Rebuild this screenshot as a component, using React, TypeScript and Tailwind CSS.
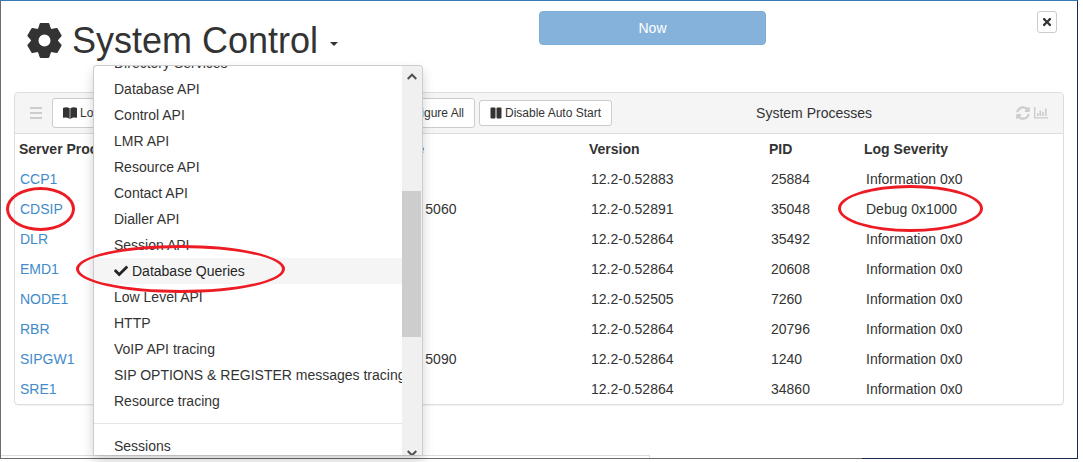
import { useState } from "react";
import { clsx } from "clsx";
import { FaCheck, FaSyncAlt, FaTimes } from "react-icons/fa";

interface ServerProcess {
  name: string;
  port?: string;
  version: string;
  pid: number;
  severity: string;
  marked?: boolean;
}

const processes: ServerProcess[] = [
  { name: "CCP1", version: "12.2-0.52883", pid: 25884, severity: "Information 0x0" },
  { name: "CDSIP", port: "UDP: 5060", version: "12.2-0.52891", pid: 35048, severity: "Debug 0x1000", marked: true },
  { name: "DLR", version: "12.2-0.52864", pid: 35492, severity: "Information 0x0" },
  { name: "EMD1", version: "12.2-0.52864", pid: 20608, severity: "Information 0x0" },
  { name: "NODE1", version: "12.2-0.52505", pid: 7260, severity: "Information 0x0" },
  { name: "RBR", version: "12.2-0.52864", pid: 20796, severity: "Information 0x0" },
  { name: "SIPGW1", port: "UDP: 5090", version: "12.2-0.52864", pid: 1240, severity: "Information 0x0" },
  { name: "SRE1", version: "12.2-0.52864", pid: 34860, severity: "Information 0x0" },
];

const traceOptions = [
  "Directory Services",
  "Database API",
  "Control API",
  "LMR API",
  "Resource API",
  "Contact API",
  "Dialler API",
  "Session API",
  "Database Queries",
  "Low Level API",
  "HTTP",
  "VoIP API tracing",
  "SIP OPTIONS & REGISTER messages tracing",
  "Resource tracing",
];

function Ring({ className }: { className: string }) {
  return (
    <span
      className={clsx(
        "pointer-events-none absolute rounded-[50%] border-[3px] border-[#ed1c24]",
        className,
      )}
    />
  );
}

function GearIcon() {
  return (
    <svg viewBox="-17.5 -17.5 35 35" className="h-[35px] w-[35px]" fill="currentColor">
      <circle r="9.8" fill="none" stroke="currentColor" strokeWidth="7.6" />
      {[0, 60, 120, 180, 240, 300].map((angle) => (
        <path
          key={angle}
          d="M-6.5-11.5-4.900-16.500Q-4.700-17.300-3.900-17.400H3.900Q4.700-17.300 4.900-16.500L6.500-11.500z"
          transform={`rotate(${angle})`}
        />
      ))}
    </svg>
  );
}

function BookIcon() {
  return (
    <svg viewBox="0 0 14 12" className="h-3 w-3.5" fill="currentColor">
      <path d="M0 1Q3.500-.6 6.700 1.300V11.900Q3.800 9.800 0 10.800zM14 1Q10.500-.6 7.300 1.300V11.900Q10.200 9.800 14 10.800z" />
    </svg>
  );
}

function PauseIcon() {
  return (
    <svg viewBox="0 0 12 12" className="h-3 w-3" fill="currentColor">
      <rect x="0.500" y="0.500" width="5" height="11" rx="1" />
      <rect x="6.500" y="0.500" width="5" height="11" rx="1" />
    </svg>
  );
}

function ChartIcon() {
  return (
    <svg viewBox="0 0 14 12" className="h-3 w-3.5" fill="currentColor">
      <path d="M0 0h1.400v10.200H14v1.400H0zM3 6h1.600v3H3zM5.500 3.500h1.600V9H5.500zM8.200 4.700h1.600V9H8.200zM11 1.500h1.600V9H11z" />
    </svg>
  );
}

function Arrow({ down = false }: { down?: boolean }) {
  return (
    <svg
      viewBox="0 0 10 7"
      className={clsx("h-[7px] w-2.5 shrink-0", down && "rotate-180")}
      fill="none"
      stroke="#505050"
      strokeWidth="2"
    >
      <path d="M.7 6 5 1.700 9.300 6" />
    </svg>
  );
}

function TraceMenu() {
  const [selected, setSelected] = useState("Database Queries");

  return (
    <div className="absolute left-[92px] top-16 z-10 h-[calc(100vh-72px)] w-[330px]">
      <div className="flex h-full overflow-hidden rounded-t border border-b-0 border-[#ccc] bg-white shadow-[0_6px_12px_rgba(0,0,0,0.175)]">
        <ul className="-mt-4 min-w-0 flex-1">
          {traceOptions.map((option) => (
            <li key={option}>
              <button
                type="button"
                onClick={() => setSelected(option)}
                className={clsx(
                  "flex h-[26px] w-full items-center gap-1 whitespace-nowrap pl-5 text-left leading-5",
                  option === selected && "bg-[#f5f5f5] text-[#262626]",
                )}
              >
                {option === selected && <FaCheck className="h-3.5 w-3.5 shrink-0" />}
                {option}
              </button>
            </li>
          ))}
          <li className="my-[9px] h-px bg-[#e5e5e5]" />
          <li>
            <button type="button" className="h-[26px] w-full pl-5 text-left leading-5">
              Sessions
            </button>
          </li>
        </ul>
        {/* Scrollbar */}
        <div className="flex w-5 shrink-0 flex-col items-center bg-[#f0f0f0] pt-[7px]">
          <Arrow />
          <div className="mr-px mt-[111px] h-[146px] w-[19px] shrink-0 bg-[#cdcdcd]" />
          <div className="mt-auto h-[5px]">
            <Arrow down />
          </div>
        </div>
      </div>
      <Ring className="-left-[17px] top-[180px] h-12 w-[209px]" />
    </div>
  );
}

function ProcessTable() {
  return (
    <table className="w-full table-fixed text-left">
      <colgroup>
        <col className="w-[367px]" />
        <col className="w-[203px]" />
        <col className="w-[180px]" />
        <col className="w-[95px]" />
        <col />
      </colgroup>
      <thead>
        <tr className="h-[30px]">
          <th className="pl-1">Server Process</th>
          <th className="pl-1">Name</th>
          <th className="pl-1">Version</th>
          <th className="pl-1">PID</th>
          <th className="pl-1">Log Severity</th>
        </tr>
      </thead>
      <tbody>
        {processes.map((p) => (
          <tr key={p.name} className="h-[30px]">
            <td className="relative pl-[5px]">
              <a href="#" className="text-[#428bca]">
                {p.name}
              </a>
              {p.marked && <Ring className="-left-[9px] -top-[7px] h-11 w-[69px]" />}
            </td>
            <td className="pl-1.5">{p.port}</td>
            <td className="pl-1.5">{p.version}</td>
            <td className="pl-1.5">{p.pid}</td>
            <td className="relative pl-1.5">
              {p.severity}
              {p.marked && <Ring className="-left-[22px] -top-[9px] h-[47px] w-[145px]" />}
            </td>
          </tr>
        ))}
      </tbody>
    </table>
  );
}

export default function App() {
  const [open, setOpen] = useState(true);

  return (
    <div className="bg-white pb-[3px] pr-[5px] font-['Liberation_Sans',Arial,sans-serif] text-sm leading-5 text-[#333]">
      <main className="relative flex min-h-[calc(100vh-3px)] flex-col border-l border-r border-t border-l-[#6b6b70] border-r-[#1b2a55] border-t-[#337ab7]">
        <header className="flex h-[91px] items-start pl-[26px] pr-5 pt-2.5">
          <h1 className="flex w-[calc(50%-3px)] items-center gap-2.5 pt-2 text-4xl">
            <GearIcon />
            <button
              type="button"
              aria-expanded={open}
              onClick={() => setOpen(!open)}
              className="flex items-center gap-3 pt-0.5"
            >
              System Control
              <span className="mt-1.5 border-x-4 border-t-4 border-x-transparent border-t-[#333]" />
            </button>
          </h1>
          <button
            type="button"
            className="h-[34px] w-[227px] rounded border border-[#7dacd7] bg-[#85b2db] text-white"
          >
            Now
          </button>
          <div className="flex flex-1 justify-end">
            <button
              type="button"
              aria-label="Close"
              className="flex h-[22px] w-5 items-center justify-center rounded-[3px] border border-[#ccc]"
            >
              <FaTimes className="h-3 w-3" />
            </button>
          </div>
        </header>

        <section className="ml-[13px] mr-[13px] rounded border border-[#ddd] shadow-[0_1px_1px_rgba(0,0,0,0.05)]">
          <div className="flex h-[41px] items-center rounded-t border-b border-[#ddd] bg-[#f5f5f5] pl-[15px] pr-[15px]">
            <button type="button" aria-label="Menu" className="flex w-3 flex-col gap-[3px]">
              <span className="h-0.5 bg-[#ccc]" />
              <span className="h-0.5 bg-[#ccc]" />
              <span className="h-0.5 bg-[#ccc]" />
            </button>
            <div className="ml-2.5 flex w-[423px] justify-between text-xs">
              <button
                type="button"
                className="flex h-[30px] items-center gap-[3px] rounded-[3px] border border-[#ccc] bg-white px-2.5"
              >
                <BookIcon />
                Log Levels
              </button>
              <button
                type="button"
                className="flex h-[30px] items-center rounded-[3px] border border-[#ccc] bg-white px-2.5"
              >
                Configure All
              </button>
            </div>
            <button
              type="button"
              className="ml-1 flex h-[26px] items-center gap-[3px] rounded-[3px] border border-[#ccc] bg-white px-2.5 text-xs"
            >
              <PauseIcon />
              Disable Auto Start
            </button>
            <h2 className="flex-1 text-center">System Processes</h2>
            <div className="flex items-center gap-1 text-[#ccc]">
              <button type="button" aria-label="Refresh">
                <FaSyncAlt className="h-3.5 w-3.5" />
              </button>
              <button type="button" aria-label="Statistics">
                <ChartIcon />
              </button>
            </div>
          </div>
          <ProcessTable />
        </section>

        {open && <TraceMenu />}

        <div className="mt-auto h-[3px] w-[649px] border-r border-t border-[#ddd]" />
        <div className="flex h-px">
          <span className="w-4/5 bg-[#6b6b6b]" />
          <span className="flex-1 bg-[#1b2a55]" />
        </div>
      </main>
    </div>
  );
}
